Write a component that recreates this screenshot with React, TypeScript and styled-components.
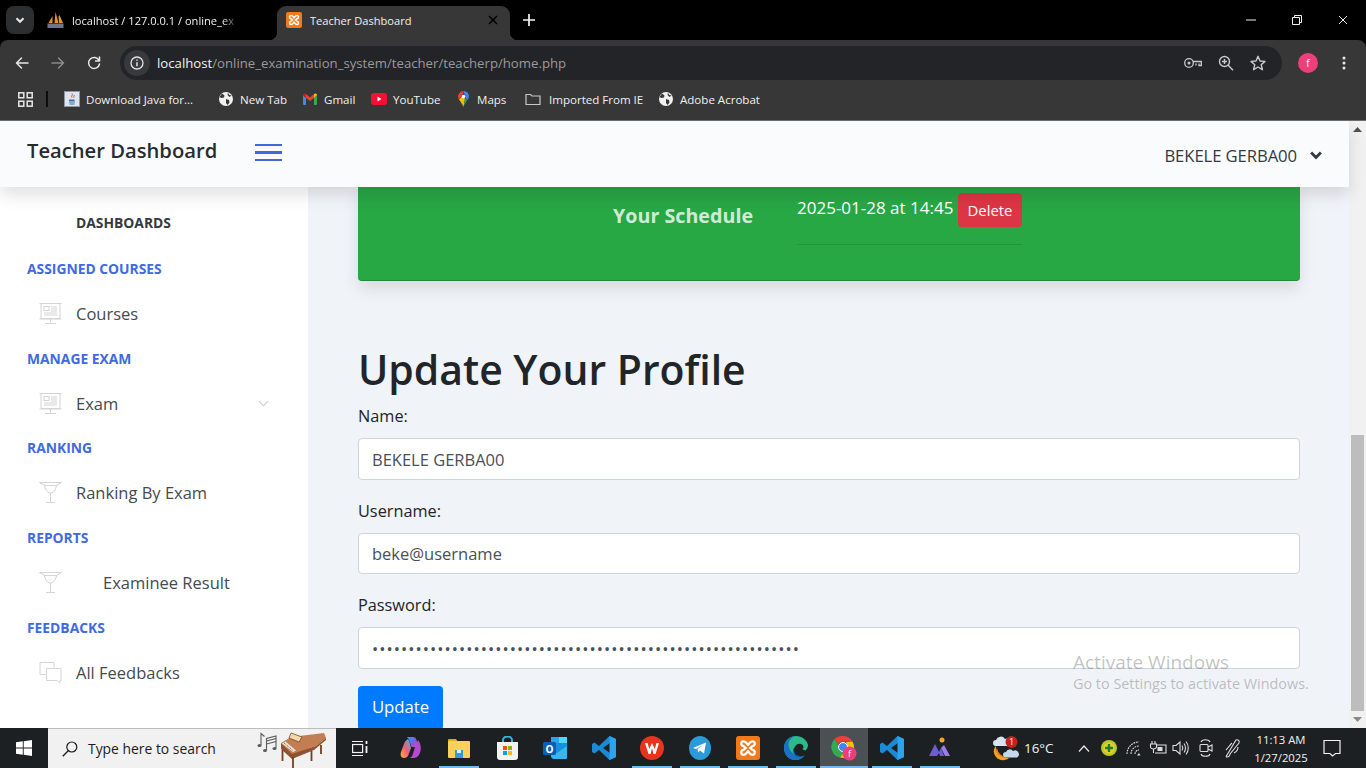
import React from "react";
import styled, { createGlobalStyle } from "styled-components";

const Global = createGlobalStyle`
  html, body { margin: 0; height: 100%; overflow: hidden; background: #000; }
  #root { height: 100%; }
  * { box-sizing: border-box; }
`;

const UI = `"Open Sans", "Noto Sans", sans-serif`;

const Screen = styled.div`
  width: 1366px; height: 768px; display: flex; flex-direction: column; overflow: hidden;
  font-family: ${UI};
`;

/* ---------- browser chrome ---------- */
const TabStrip = styled.div`
  height: 40px; flex: none; background: #000; display: flex; align-items: flex-end; position: relative; padding-left: 6px;
`;
const TabSearch = styled.div`
  width: 28px; height: 28px; margin: 0 10px 6px 0; border-radius: 8px; background: #2d2e2f; display: flex; align-items: center; justify-content: center; color: #e8e8e8;
`;
const Tab = styled.div<{ $active?: boolean }>`
  width: 233px; height: 34px; display: flex; align-items: center; padding: 0 ${p => (p.$active ? 12 : 16)}px 6px ${p => (p.$active ? 9 : 3)}px; gap: 8px; position: relative;
  border-radius: 9px 9px 0 0; background: ${p => (p.$active ? "#373737" : "transparent")};
  ${p => p.$active && `
    &::before, &::after { content: ""; position: absolute; bottom: 0; width: 8px; height: 8px; }
    &::before { left: -8px; background: radial-gradient(circle at 0 0, transparent 8px, #373737 8.5px); }
    &::after { right: -8px; background: radial-gradient(circle at 100% 0, transparent 8px, #373737 8.5px); }
  `}
`;
const TabTitle = styled.span<{ $fade?: boolean }>`
  flex: 1; font-size: 11.1px; color: #f1f1f1; white-space: nowrap; overflow: hidden;
  ${p => p.$fade && `-webkit-mask-image: linear-gradient(90deg, #000 88%, transparent 98%); mask-image: linear-gradient(90deg, #000 88%, transparent 98%);`}
`;
const NewTab = styled.div`
  width: 28px; height: 28px; margin: 0 0 6px 5px; display: flex; align-items: center; justify-content: center; color: #f4f4f4;
`;
const WindowControls = styled.div`
  margin-left: auto; height: 40px; display: flex; align-items: center; color: #f1f1f1;
`;
const WinBtn = styled.div`
  width: 46px; height: 40px; display: flex; align-items: center; justify-content: center;
`;

const ChromeBody = styled.div`
  flex: none; height: 81px; background: #373737; border-radius: 8px 8px 0 0; border-bottom: 1px solid #6d6d6d; display: flex; flex-direction: column;
`;
const Toolbar = styled.div`
  height: 40px; padding-top: 6px; display: flex; align-items: center; flex: none;
`;
const NavBtn = styled.div<{ $dim?: boolean }>`
  width: 36px; height: 34px; display: flex; align-items: center; justify-content: center; color: ${p => (p.$dim ? "#8b8b8b" : "#e8e8e8")};
  &:first-child { margin-left: 4px; }
`;
const Omnibox = styled.div`
  width: 1162px; height: 34px; margin-left: 8px; border-radius: 17px; background: #232427; display: flex; align-items: center; padding: 0 16px 0 4px;
`;
const SiteInfo = styled.div`
  width: 26px; height: 26px; border-radius: 50%; background: #38393c; display: flex; align-items: center; justify-content: center; color: #e4e4e4; margin-right: 7px;
`;
const Url = styled.div`
  font-size: 13.2px; color: #9a9a9a; white-space: nowrap; flex: 1;
  b { font-weight: 400; color: #f1f1f1; }
`;
const OmniIcons = styled.div`
  display: flex; gap: 16px; align-items: center; color: #c9c9c9;
`;
const Avatar = styled.div`
  width: 20px; height: 20px; margin-left: 16px; border-radius: 50%; background: #ec407a; color: #fff; font-size: 10px; display: flex; align-items: center; justify-content: center;
`;
const DotsBtn = styled.div`
  width: 24px; margin-left: 14px; display: flex; justify-content: center; color: #e8e8e8;
`;
const Bookmarks = styled.div`
  height: 40px; flex: none; display: flex; align-items: center; padding: 0 0 2px 18px; font-size: 11.55px; color: #f1f1f1;
`;
const AppsSep = styled.div`
  width: 2px; height: 16px; background: #0d0d0d; margin: 0 16px 0 13px;
`;
const Bookmark = styled.div<{ $w: number; $gap?: number }>`
  width: ${p => p.$w}px; display: flex; align-items: center; gap: ${p => p.$gap ?? 7}px; white-space: nowrap;
`;

/* ---------- page ---------- */
const Viewport = styled.div`
  flex: 1; min-height: 0; display: flex; position: relative; overflow: hidden;
`;
const Page = styled.div`
  flex: 1; min-width: 0; display: flex; flex-direction: column; background: #f0f3f7;
`;
const Navbar = styled.header`
  height: 66px; flex: none; background: #fafbfd; display: flex; align-items: center; padding: 0 26px 0 27px; position: relative; z-index: 2;
  box-shadow: 0 8px 16px rgba(0, 0, 0, .12);
`;
const Brand = styled.div`
  font-size: 20.2px; font-weight: 600; color: #272b30; width: 228px; margin-top: -9px; white-space: nowrap;
`;
const Burger = styled.div`
  width: 27px; display: flex; flex-direction: column; gap: 5px; margin-top: -3px;
  span { height: 2.4px; background: #4169d6; display: block; }
`;
const UserMenu = styled.div`
  margin-left: auto; display: flex; align-items: center; gap: 12px; font-size: 16.7px; color: #343a40; margin-top: 2px; letter-spacing: -.1px;
`;
const Body = styled.div`
  flex: 1; min-height: 0; display: flex;
`;
const Sidebar = styled.nav`
  width: 308px; flex: none; background: #fff; padding-top: 14px; display: grid; grid-auto-rows: 44.9px; align-content: start;
`;
const DashTitle = styled.div`
  padding: 0 0 2px 76px; align-self: center; font-size: 13.85px; font-weight: 700; color: #343a40;
`;
const SectionTitle = styled.div`
  padding: 0 0 0 27px; align-self: center; font-size: 13.85px; font-weight: 700; color: #4169e1; white-space: nowrap;
`;
const NavItem = styled.div`
  display: flex; align-items: center; padding-left: 39px; color: #454a50; font-size: 16.5px; position: relative;
`;
const NavIcon = styled.div`
  width: 23px; height: 23px; flex: none; margin-right: 14px; color: #d4d4d4;
`;
const NavLabel = styled.span<{ $indent?: boolean }>`
  margin-left: ${p => (p.$indent ? 27 : 0)}px; white-space: nowrap;
`;
const NavChevron = styled.div`
  margin-left: auto; margin-right: 38px; color: #c9c9c9; display: flex;
`;
const Main = styled.main`
  flex: 1; min-width: 0; padding: 0 49px 0 50px; overflow: hidden;
`;
const ScheduleCard = styled.section`
  height: 94px; background: #28a745; border-bottom: 1px solid #218a3a; border-radius: 0 0 4px 4px; padding-left: 255px; display: flex;
  box-shadow: 0 8px 16px rgba(0, 0, 0, .1);
`;
const CardTitle = styled.h2`
  width: 184px; margin: 15px 0 0; font-size: 19.7px; line-height: 28px; font-weight: 700; color: rgba(255, 255, 255, .8); white-space: nowrap;
`;
const ScheduleList = styled.div`
  width: 225px; padding-top: 6px;
`;
const ScheduleRow = styled.div`
  display: flex; align-items: flex-start; justify-content: space-between; color: #fff; font-size: 17px; line-height: 30px; white-space: nowrap;
`;
const DeleteBtn = styled.button`
  width: 64px; height: 34px; border: 0; border-radius: 4px; background: #dc3545; color: #fff; font: 14.9px ${UI}; padding: 0;
`;
const ScheduleRule = styled.hr`
  border: 0; border-top: 1px solid rgba(0, 0, 0, .1); margin: 17px 0 0;
`;
const Heading = styled.h1`
  margin: 61px 0 7px; font-size: 40.9px; line-height: 54px; font-weight: 600; color: #212529; white-space: nowrap;
`;
const FormGroup = styled.div`
  margin-bottom: 18px;
  &:last-of-type { margin-bottom: 17.5px; }
`;
const FieldLabel = styled.label`
  display: block; font-size: 16.3px; line-height: 27px; margin-bottom: 8px; color: #212529;
`;
const TextInput = styled.input`
  display: block; width: 100%; height: 41.5px; border: 1px solid #ced4da; border-radius: 4px; background: #fff; padding: 1px 13px 0; color: #495057; font: 16.5px ${UI}; outline: none;
  &[type="password"] { letter-spacing: 1.05px; }
`;
const UpdateBtn = styled.button`
  width: 85px; height: 44px; border: 0; border-radius: 4px; background: #007bff; color: #fff; font: 16.7px ${UI}; padding: 0 0 3px;
`;

/* scrollbar */
const Scrollbar = styled.div`
  width: 17px; flex: none; background: #f1f1f1; display: flex; flex-direction: column; align-items: center; color: #505050;
`;
const ScrollArrow = styled.div`
  height: 17px; flex: none; display: flex; align-items: center; justify-content: center;
`;
const ScrollThumb = styled.div`
  width: 13px; height: 276px; margin-top: auto; background: #bdbdbd; flex: none;
`;
const Activation = styled.div`
  position: absolute; left: 1073px; top: 529px; color: rgba(90, 95, 100, .38); white-space: nowrap;
`;
const ActTitle = styled.div` font-size: 19px; line-height: 24px; `;
const ActSub = styled.div` font-size: 14.4px; line-height: 20px; `;

/* ---------- taskbar ---------- */
const Taskbar = styled.footer`
  height: 40px; flex: none; background: #1c2022; display: flex; align-items: center; color: #f2f2f2; position: relative; z-index: 3;
`;
const StartBtn = styled.div`
  width: 48px; height: 40px; display: flex; align-items: center; justify-content: center; color: #fff;
`;
const SearchBox = styled.div`
  width: 288px; height: 40px; background: #f1f1f1; border-top: 1px solid #bcbcbc; display: flex; align-items: center; padding-left: 14px; color: #1c1c1c; font-size: 13.9px; flex: none;
`;
const SearchText = styled.span` margin-left: 10px; flex: 1; white-space: nowrap; `;
const PianoArt = styled.div` align-self: flex-end; margin-right: 8px; `;
const Slot = styled.div<{ $on?: boolean; $active?: boolean }>`
  width: 48.1px; height: 40px; display: flex; align-items: center; justify-content: center; position: relative; flex: none;
  background: ${p => (p.$active ? "#4b5054" : "transparent")};
  ${p => p.$on && `&::after { content: ""; position: absolute; left: ${p.$active ? 0 : 4}px; right: ${p.$active ? 0 : 4}px; bottom: 0; height: 2px; background: #76b9ed; }`}
`;
const TaskViewSlot = styled(Slot)` margin-right: 3px; `;
const Tray = styled.div`
  margin-left: auto; display: flex; align-items: center; height: 40px; font-size: 13px;
`;
const Weather = styled.div`
  display: flex; align-items: center; gap: 5px; width: 80px; font-size: 13.4px; white-space: nowrap;
`;
const TrayIcon = styled.div<{ $w: number }>`
  width: ${p => p.$w}px; display: flex; justify-content: center; align-items: center; color: #e8e8e8;
`;
const Clock = styled.div`
  width: 74px; padding-top: 1px; text-align: center; font-size: 11.3px; line-height: 18px; white-space: nowrap;
`;
const NotifyBtn = styled.div`
  width: 48px; display: flex; justify-content: center; padding-right: 20px; color: #f2f2f2;
`;

/* ---------- drawings ---------- */
const S = ({ w = 16, h = 16, vb = "0 0 16 16", children }: { w?: number; h?: number; vb?: string; children: React.ReactNode }) => (
  <svg width={w} height={h} viewBox={vb} fill="none" style={{ display: "block", flex: "none" }}>{children}</svg>
);
const line = { stroke: "currentColor", strokeWidth: 1.5, strokeLinecap: "round" as const, strokeLinejoin: "round" as const };

const Chevron = ({ w = 10, sw = 2 }: { w?: number; sw?: number }) => <S w={w} h={w} vb="0 0 10 10"><path d="M1.5 3.2 5 6.8l3.5-3.6" stroke="currentColor" strokeWidth={sw} /></S>;
const Cross = ({ s = 10, sw = 1.5 }: { s?: number; sw?: number }) => <S w={s} h={s} vb="0 0 10 10"><path d="M1 1l8 8M9 1 1 9" stroke="currentColor" strokeWidth={sw} /></S>;

const PmaFav = () => (
  <S w={17} h={18} vb="0 0 17 18">
    <path d="M1.500 12 5.500 5v7zM7.500 12 8.500 1l3 11zM12 12l-.5-6 1-2L16 12z" fill="#e8912a" />
    <rect x=".5" y="12.500" width="16" height="4.500" fill="#6f7590" />
  </S>
);
const XamppFav = ({ s = 16 }: { s?: number }) => (
  <S w={s} h={s} vb="0 0 16 16">
    <rect width="16" height="16" rx="2" fill="#f27a1a" />
    <path d="M5 3.500c-2 0-2 3 0 3.200L6.500 8 5 9.300c-2 .2-2 3.200 0 3.200s2-1.600 3-2.400c1 .8 1 2.400 3 2.400s2-3 0-3.200L9.500 8 11 6.700c2-.2 2-3.200 0-3.200S9 5.100 8 5.900C7 5.100 7 3.500 5 3.500z" fill="none" stroke="#fff" strokeWidth="1.500" />
  </S>
);
const Globe = () => (
  <S w={14} h={14} vb="0 0 14 14">
    <circle cx="7" cy="7" r="7" fill="#f1f1f1" />
    <path d="M3 1.500 5.500 3.500 5 5.500 2.500 6 .5 5zM7 7l3 1 .5 2.500L8.500 13 7 11zM9 .8l1 2 2.500.8-2 1.400L8.500 3z" fill="#373737" />
  </S>
);
const JavaFav = () => (
  <S w={16} h={16}>
    <rect x=".5" y=".5" width="15" height="15" fill="#dfe5ec" stroke="#8a98a8" />
    <path d="M5 11h6M5.500 13h5" stroke="#3a6ea5" />
    <path d="M8 2.500c1.500 1.500-1.500 2.500 0 4M10 4c.8 1-1 1.500 0 2.500" stroke="#d0473a" />
    <path d="M5 8.500h5.500v1.500H5z" fill="#3a6ea5" />
  </S>
);
const GmailFav = () => (
  <S w={14} h={12} vb="0 0 14 12">
    <path d="M0 2v9a1 1 0 0 0 1 1h2V5z" fill="#4285f4" /><path d="M14 2v9a1 1 0 0 1-1 1h-2V5z" fill="#34a853" />
    <path d="M3 5v-4L7 4.500 11 1v4L7 8z" fill="#ea4335" /><path d="M0 2c0-1.500 2-2 3-1v4z" fill="#c5221f" /><path d="M14 2c0-1.500-2-2-3-1v4z" fill="#fbbc04" />
  </S>
);
const YoutubeFav = () => (
  <S w={16} h={12} vb="0 0 16 12"><rect width="16" height="12" rx="3" fill="#f50f35" /><path d="M6.500 3.500v5L10.500 6z" fill="#fff" /></S>
);
const MapsFav = () => (
  <S w={11} h={16} vb="0 0 11 16">
    <path d="M5.500 0A5.500 5.500 0 0 0 1 8.500L5.500 2z" fill="#ea4335" /><path d="M5.500 0C8 0 10 1.500 10.700 3.500L7 5z" fill="#4285f4" />
    <path d="M10.700 3.500C11.500 6 10 8 9 9.500L7 5z" fill="#4285f4" /><path d="M1 8.500 4 5.500 7 7 5.500 16C4.500 13 2.500 10.800 1 8.500z" fill="#fbbc04" /><path d="M7 7l2 2.500C8 11 6.200 13 5.500 16z" fill="#34a853" />
    <circle cx="5.500" cy="5.500" r="1.800" fill="#fff" />
  </S>
);
const Folder = () => <S w={16} h={14} vb="0 0 16 14"><path d="M1 2.500h4.500l1.500 1.500h8v8.500H1z" stroke="#c8c8c8" strokeWidth="1.200" /></S>;
const Board = () => (
  <S w={23} h={23} vb="0 0 23 23">
    <g stroke="currentColor" strokeWidth="1">
      <path d="M.5 1.500h22M2 1.500v15h19v-15M.5 17h22M11.500 17v3.500M6 21.500h11" />
      <rect x="5" y="4.500" width="5" height="4" /><path d="M12 5h6M12 7h6M12 9h6M5 11h13M5 13h13" />
    </g>
  </S>
);
const Trophy = () => (
  <S w={23} h={23} vb="0 0 23 23">
    <g stroke="currentColor" strokeWidth="1"><path d="M.5 1.500h22L18 4l-2 5c-1 2-3 3-4.500 3S8 11 7 9L5 4zM11.500 12v9M7 21.500h9M5 4.500h13" /></g>
  </S>
);
const Chat = () => (
  <S w={23} h={23} vb="0 0 23 23">
    <g stroke="currentColor" strokeWidth="1"><path d="M7 13.500H1V1.500h14v5" /><path d="M7.500 7.500h14.500v12h-1v2.500l-3-2.500H7.500z" /></g>
  </S>
);

/* taskbar art */
const WinLogo = () => <S w={16} h={16}><path d="M0 2.300 6.800 1.300v6.200H0zM7.700 1.200 16 0v7.500H7.700zM0 8.500h6.800v6.200L0 13.700zM7.700 8.500H16V16l-8.300-1.200z" fill="#fff" /></S>;
const Lens = () => <S w={16} h={16}><circle cx="9.800" cy="6" r="5" stroke="#1c1c1c" strokeWidth="1.200" /><path d="M6.200 9.700.8 15.200" stroke="#1c1c1c" strokeWidth="1.300" /></S>;
const Piano = () => (
  <S w={72} h={36} vb="0 0 72 36">
    <g stroke="#5a5a5a" strokeWidth="1.100" fill="none">
      <path d="M5 13V1.500l3.500 3" />
      <path d="M10.500 18V6.500l9.500-2.500v12M10.500 9l9.500-2.500M10.500 12l9.500-2.500" />
    </g>
    <g fill="#5a5a5a"><ellipse cx="3.500" cy="13.500" rx="2" ry="1.600" /><ellipse cx="9" cy="18.500" rx="2" ry="1.600" /><ellipse cx="18.500" cy="16.500" rx="2" ry="1.600" /></g>
    <path d="M25 11 35 5l33-4 2 5-10 8-6 2-18 8z" fill="#c27d52" />
    <path d="M25 11v6l11 10 22-9 12-10V6l-10 8-24 8z" fill="#8e5233" />
    <path d="M26 11.500 37 20l3-1.500L29.500 9.500z" fill="#efe6d8" />
    <path d="M28 11l9 7.500" stroke="#3a2a20" strokeWidth=".8" strokeDasharray="1 1" />
    <path d="M35 1l11 4-3 5-10-4z" fill="#f3d9a8" stroke="#7d4427" strokeWidth=".8" />
    <path d="M26.500 18v11M37 25v11M55.500 19v10M65 13v9" stroke="#76401f" strokeWidth="1.800" />
  </S>
);
const TaskView = () => <S w={17} h={17} vb="0 0 17 17"><g stroke="#f2f2f2" strokeWidth="1.200"><path d="M0 1.500h11M0 15.500h11" /><rect x=".6" y="4.500" width="10" height="8" /><path d="M14.500 1v3M14.500 6v7" strokeWidth="1.800" /></g></S>;
const Copilot = () => (
  <S w={24} h={24} vb="0 0 24 24">
    <defs><linearGradient id="cpa" x1="0" y1="0" x2="1" y2="1"><stop offset="0" stopColor="#2aa4e8" /><stop offset=".55" stopColor="#7b5be0" /><stop offset="1" stopColor="#e8489a" /></linearGradient>
      <linearGradient id="cpb" x1="0" y1="1" x2="1" y2="0"><stop offset="0" stopColor="#f6b73c" /><stop offset=".5" stopColor="#ee5c7a" /><stop offset="1" stopColor="#3fb7e8" /></linearGradient></defs>
    <path d="M9 1h5c2 0 3 1 3.500 3l2 7h-7L10 4C9.500 2.500 9 2 8 2c.3-.6.6-1 1-1z" fill="url(#cpa)" />
    <path d="M5 8c.5-2 2-4 4-5 1 1 1.500 3 2 5l1 4-3 8c-1 1-2 2-4 2-3 0-4-3-3-6z" fill="url(#cpb)" />
    <path d="M19 4c2 2 3.500 7 2.500 11s-3 7-6.500 7h-5c2 0 3-1.500 3.500-3L16 11c1-2 2-5 3-7z" fill="#b34bd0" />
  </S>
);
const Explorer = () => (
  <S w={22} h={20} vb="0 0 22 20">
    <path d="M0 2a1 1 0 0 1 1-1h7l2 3H0z" fill="#e9a81e" /><rect y="3" width="22" height="17" rx="1" fill="#fbd15b" />
    <path d="M7 12h8v8H7z" fill="#2f9bd8" /><path d="M9 12h4v3H9z" fill="#fff" opacity=".85" />
  </S>
);
const Store = () => (
  <S w={23} h={24} vb="0 0 23 24">
    <path d="M7 7V4a4.500 3.500 0 0 1 9 0v3" stroke="#2fb6d9" strokeWidth="2" />
    <path d="M1 6h21v15a3 3 0 0 1-3 3H4a3 3 0 0 1-3-3z" fill="#f2f2f2" />
    <path d="M7 10h4v4H7z" fill="#f25022" /><path d="M12 10h4v4h-4z" fill="#7fba00" /><path d="M7 15h4v4H7z" fill="#00a4ef" /><path d="M12 15h4v4h-4z" fill="#ffb900" />
  </S>
);
const Outlook = () => (
  <S w={24} h={22} vb="0 0 24 22">
    <path d="M8 0h16v12l-8 6H8z" fill="#1490df" /><path d="M8 0h8v6H8z" fill="#28a8ea" /><path d="M16 0h8v6h-8z" fill="#50d9ff" />
    <path d="M10 22h13a1 1 0 0 0 1-1V9l-10 7-6-4v8z" fill="#35b8f1" />
    <rect y="5" width="13" height="13" rx="1.500" fill="#0a5fb4" />
    <text x="6.500" y="15.500" textAnchor="middle" fontSize="10" fontWeight="700" fill="#fff" fontFamily="Open Sans">O</text>
  </S>
);
const VSCode = () => (
  <S w={24} h={24} vb="0 0 24 24">
    <path d="M17.500 0 7 10 2.500 6.500 0 8v8l2.500 1.500L7 14l10.500 10 6.500-3V3zM18 7v10l-7-5z" fill="#1a8ad4" />
    <path d="M17.500 0 24 3v18l-6.500 3z" fill="#2aa4ef" />
  </S>
);
const Wps = () => (
  <S w={24} h={24} vb="0 0 24 24">
    <circle cx="12" cy="12" r="12" fill="#e8341c" />
    <path d="M5 7l3.500 11h2L12 12l1.500 6h2L19 7h-2.500L14.700 13 12 7l-2.700 6L7.500 7z" fill="#fff" />
  </S>
);
const Telegram = () => (
  <S w={22} h={24} vb="0 0 22 24">
    <ellipse cx="11" cy="12" rx="11" ry="12" fill="#2c9ad8" />
    <path d="M4 12 17 6.500 15 17.500l-4-3-2 2-.5-3.500L15 8.500 7 13z" fill="#fff" />
  </S>
);
const Edge = () => (
  <S w={24} h={24} vb="0 0 24 24">
    <path d="M12 0C5 0 0 5.500 0 12c0 6.500 5 12 11 12 4 0 7-1.500 9.500-4.500-3 1.500-8 1.500-10-1.500-1.500-2-1.500-5 0-6.500C11 9.500 14 7 17 8c3 1 3 4 1.500 5.500l3 1C23 13 24 11 24 9 23 4 18 0 12 0z" fill="#2dba8a" />
    <path d="M0 12C0 5 5 0 12 0c-5 1-9 6-7 11 1 5 5 8 10 9 2 .5 4 .5 5.500-.5C18 22.500 15 24 11 24 5 24 0 18.500 0 12z" fill="#1771c6" />
    <path d="M10.500 12c-1.500 1.500-1.500 4.500 0 6.500 2 3 7 3 10 1.500-3 .5-7 0-9-2-1-1.500-1.500-4-1-6z" fill="#0e4e9b" />
  </S>
);
const ChromeIcon = () => (
  <S w={26} h={26} vb="0 0 26 26">
    <path d="M12 1a11 11 0 0 1 9.500 5.500H12a5.500 5.500 0 0 0-5 3L3.500 4A11 11 0 0 1 12 1z" fill="#ea4335" />
    <path d="M3.500 4 8.500 12.500a4 4 0 0 0 4.500 4L9 22.500A11 11 0 0 1 3.500 4z" fill="#34a853" />
    <path d="M21.500 6.500A11 11 0 0 1 9 22.500l4.500-6.500a4 4 0 0 0 2.500-5.500L15 7z" fill="#fbbc04" />
    <circle cx="12" cy="12" r="4.500" fill="#4285f4" stroke="#fff" strokeWidth="1" />
    <circle cx="18.500" cy="18.500" r="7" fill="#ec407a" />
    <text x="18.500" y="22" textAnchor="middle" fontSize="9" fill="#fff" fontFamily="Open Sans">f</text>
  </S>
);
const Mountains = () => (
  <S w={24} h={24} vb="0 0 24 24">
    <circle cx="14" cy="4" r="2.500" fill="#f5a623" />
    <path d="M1 20 7 8l4 8 2-4 3 8h-4l-1-3-2 3z" fill="#6d5dd3" /><path d="M13 12l3-3 6 11h-5z" fill="#9b7cf0" />
  </S>
);
const WeatherIcon = () => (
  <S w={27} h={28} vb="0 0 27 28">
    <path d="M4 12c0 7 4 12 13 12-3 3-10 3-13-1s-3-8 0-11z" fill="#f5a21e" />
    <path d="M5 14c1 5 4 8 9 9-5 1-8-1-10-5z" fill="#e8861a" />
    <path d="M1 9a3 3 0 0 1 3-3 5 5 0 0 1 9-1 3.500 3.500 0 0 1 3 7H3a3 3 0 0 1-2-3z" fill="#d8e4f0" />
    <path d="M11 21a3 3 0 0 1 3-3 4 4 0 0 1 7-1 3.500 3.500 0 0 1 4 6.500H13a3 3 0 0 1-2-2.500z" fill="#c5d8ec" />
    <circle cx="19.500" cy="8" r="6" fill="#c8201e" />
    <text x="19.500" y="11" textAnchor="middle" fontSize="9" fill="#fff" fontFamily="Open Sans">1</text>
  </S>
);
const GreenTray = () => (
  <S w={16} h={16}><circle cx="8" cy="8" r="8" fill="#b9c92a" /><circle cx="8" cy="8" r="5.500" fill="#e8cf2a" /><path d="M8 4v8M4 8h8" stroke="#1d7d2e" strokeWidth="2.400" /></S>
);
const Wifi = () => <S w={16} h={16}><g stroke="#ddd" strokeWidth="1.100" strokeDasharray="1.800 .8"><path d="M9 14a4 4 0 0 1 4-4M5 14a8 8 0 0 1 8-8M1 14A12 12 0 0 1 13 2" /></g><path d="M11 15.500l2-2.500 1.500 2.500z" fill="#ddd" /></S>;
const Battery = () => <S w={18} h={16} vb="0 0 18 16"><g stroke="#ddd" strokeWidth="1.100"><path d="M8 5h9v8H6" /><path d="M3 1v3M6 1v3M1.500 4h6v3c0 1-1.500 2-3 2s-3-1-3-2zM4.500 9v4" /></g><rect x="8.500" y="7" width="5" height="4" fill="#ddd" /></S>;
const Speaker = () => <S w={17} h={16} vb="0 0 17 16"><g stroke="#ddd" strokeWidth="1.100"><path d="M1 5.500h3L8 2v12L4 10.500H1z" /><path d="M10 5.500c1 1.500 1 3.500 0 5M12 3.500c2 2.500 2 6.500 0 9M14 1.500c3 3.500 3 9.500 0 13" /></g></S>;
const Meet = () => <S w={14} h={20} vb="0 0 14 20"><g stroke="#ddd" strokeWidth="1.100"><path d="M2 4c1-3 8-3 9 0M2 16c1 3 8 3 9 0" /><rect x="1" y="6.500" width="8" height="7" rx="1" /><path d="M9 9l4-2v6l-4-2" /></g></S>;
const Pen = () => <S w={18} h={20} vb="0 0 18 20"><g stroke="#ddd" strokeWidth="1.100" fill="none"><path d="M3 17 12 2c2-1 4 1 3 3L6 16c0 1-1 3-3 3-1 0-1-1 0-2zM8 5c-2 2-4 5-6 7M14 9c0 3-2 5-4 6" /></g></S>;
const Notify = () => <S w={18} h={18} vb="0 0 18 18"><path d="M1 1.500h16v13h-4.500L9.500 17l-2.500-2.500H1z" stroke="#f2f2f2" strokeWidth="1.200" /></S>;

const bookmarks: { w: number; gap?: number; icon: React.ReactNode; label: string }[] = [
  { w: 155, gap: 6, icon: <JavaFav />, label: "Download Java for..." },
  { w: 84, icon: <Globe />, label: "New Tab" },
  { w: 68, icon: <GmailFav />, label: "Gmail" },
  { w: 87, gap: 6, icon: <YoutubeFav />, label: "YouTube" },
  { w: 67, gap: 8, icon: <MapsFav />, label: "Maps" },
  { w: 134, gap: 8, icon: <Folder />, label: "Imported From IE" },
  { w: 110, icon: <Globe />, label: "Adobe Acrobat" },
];

const apps: { art: React.ReactNode; on?: boolean; active?: boolean }[] = [
  { art: <Copilot /> },
  { art: <Explorer />, on: true },
  { art: <Store /> },
  { art: <Outlook /> },
  { art: <VSCode /> },
  { art: <Wps />, on: true },
  { art: <Telegram />, on: true },
  { art: <XamppFav s={24} />, on: true },
  { art: <Edge />, on: true },
  { art: <ChromeIcon />, on: true, active: true },
  { art: <VSCode />, on: true },
  { art: <Mountains />, on: true },
];

type Row =
  | { kind: "dash" | "section"; label: string }
  | { kind: "item"; label: string; icon: React.ReactNode; indent?: boolean; more?: boolean };

const rows: Row[] = [
  { kind: "dash", label: "DASHBOARDS" },
  { kind: "section", label: "ASSIGNED COURSES" },
  { kind: "item", label: "Courses", icon: <Board /> },
  { kind: "section", label: "MANAGE EXAM" },
  { kind: "item", label: "Exam", icon: <Board />, more: true },
  { kind: "section", label: "RANKING" },
  { kind: "item", label: "Ranking By Exam", icon: <Trophy /> },
  { kind: "section", label: "REPORTS" },
  { kind: "item", label: "Examinee Result", icon: <Trophy />, indent: true },
  { kind: "section", label: "FEEDBACKS" },
  { kind: "item", label: "All Feedbacks", icon: <Chat /> },
];

const noop = () => undefined;

export default function App() {
  return (
    <Screen>
      <Global />
      <TabStrip>
        <TabSearch><Chevron w={10} /></TabSearch>
        <Tab>
          <PmaFav />
          <TabTitle $fade>localhost / 127.0.0.1 / online_ex</TabTitle>
          <Cross />
        </Tab>
        <Tab $active>
          <XamppFav />
          <TabTitle>Teacher Dashboard</TabTitle>
          <Cross />
        </Tab>
        <NewTab><S w={12} h={12} vb="0 0 12 12"><path d="M6 0v12M0 6h12" stroke="currentColor" strokeWidth="1.700" /></S></NewTab>
        <WindowControls>
          <WinBtn><S w={10} h={10} vb="0 0 10 10"><path d="M0 5h10" stroke="currentColor" /></S></WinBtn>
          <WinBtn><S w={10} h={10} vb="0 0 10 10"><path d="M.5 2.500h7v7h-7zM2.500 2.500v-2h7v7h-2" stroke="currentColor" /></S></WinBtn>
          <WinBtn><Cross s={10} sw={1} /></WinBtn>
        </WindowControls>
      </TabStrip>

      <ChromeBody>
        <Toolbar>
          <NavBtn><S><path d="M14 8H2.500M7.500 3 2.500 8l5 5" {...line} /></S></NavBtn>
          <NavBtn $dim><S><path d="M2 8h11.500M8.500 3l5 5-5 5" {...line} /></S></NavBtn>
          <NavBtn><S><path d="M13 5.500A5.500 5.500 0 1 0 13.500 9M13.500 2v4h-4" {...line} /></S></NavBtn>
          <Omnibox>
            <SiteInfo><S w={14} h={14} vb="0 0 14 14"><circle cx="7" cy="7" r="6" stroke="currentColor" strokeWidth="1.300" /><path d="M7 6.300v4M7 3.500v1.300" stroke="currentColor" strokeWidth="1.500" /></S></SiteInfo>
            <Url><b>localhost</b>/online_examination_system/teacher/teacherp/home.php</Url>
            <OmniIcons>
              <S w={18} h={12} vb="0 0 18 12"><circle cx="5" cy="6" r="4.300" stroke="currentColor" strokeWidth="1.300" /><circle cx="5" cy="6" r="1.500" fill="currentColor" /><path d="M9 4.500h8.300v4h-2.300v-2M12 6.500v2" stroke="currentColor" strokeWidth="1.300" /></S>
              <S w={16} h={16}><circle cx="6.500" cy="6.500" r="5" stroke="currentColor" strokeWidth="1.400" /><path d="M10 10l5 5.300M4 6.500h5M6.500 4v5" stroke="currentColor" strokeWidth="1.400" /></S>
              <S w={16} h={16}><path d="M8 1.300 10 6l5 .4-3.800 3.300 1.200 5L8 12l-4.400 2.700 1.200-5L1 6.400 6 6z" stroke="currentColor" strokeWidth="1.400" strokeLinejoin="round" /></S>
            </OmniIcons>
          </Omnibox>
          <Avatar>f</Avatar>
          <DotsBtn><S w={4} h={14} vb="0 0 4 14"><circle cx="2" cy="2" r="1.500" fill="currentColor" /><circle cx="2" cy="7" r="1.500" fill="currentColor" /><circle cx="2" cy="12" r="1.500" fill="currentColor" /></S></DotsBtn>
        </Toolbar>
        <Bookmarks>
          <S w={15} h={15} vb="0 0 15 15"><g fill="none" stroke="#e8e8e8" strokeWidth="1.500"><rect x=".8" y=".8" width="5" height="5" /><rect x="9.200" y=".8" width="5" height="5" /><rect x=".8" y="9.200" width="5" height="5" /><rect x="9.200" y="9.200" width="5" height="5" /></g></S>
          <AppsSep />
          {bookmarks.map(b => (
            <Bookmark key={b.label} $w={b.w} $gap={b.gap}>{b.icon}<span>{b.label}</span></Bookmark>
          ))}
        </Bookmarks>
      </ChromeBody>

      <Viewport>
        <Page>
          <Navbar>
            <Brand>Teacher Dashboard</Brand>
            <Burger><span /><span /><span /></Burger>
            <UserMenu>BEKELE GERBA00 <Chevron w={14} sw={2} /></UserMenu>
          </Navbar>
          <Body>
            <Sidebar>
              {rows.map(r => {
                if (r.kind === "dash") return <DashTitle key={r.label}>{r.label}</DashTitle>;
                if (r.kind === "section") return <SectionTitle key={r.label}>{r.label}</SectionTitle>;
                return (
                  <NavItem key={r.label}>
                    <NavIcon>{r.icon}</NavIcon>
                    <NavLabel $indent={r.indent}>{r.label}</NavLabel>
                    {r.more && <NavChevron><Chevron w={13} sw={.8} /></NavChevron>}
                  </NavItem>
                );
              })}
            </Sidebar>
            <Main>
              <ScheduleCard>
                <CardTitle>Your Schedule</CardTitle>
                <ScheduleList>
                  <ScheduleRow>
                    <span>2025-01-28 at 14:45</span>
                    <DeleteBtn>Delete</DeleteBtn>
                  </ScheduleRow>
                  <ScheduleRule />
                </ScheduleList>
              </ScheduleCard>
              <Heading>Update Your Profile</Heading>
              <form>
                <FormGroup>
                  <FieldLabel>Name:</FieldLabel>
                  <TextInput value="BEKELE GERBA00" onChange={noop} />
                </FormGroup>
                <FormGroup>
                  <FieldLabel>Username:</FieldLabel>
                  <TextInput value="beke@username" onChange={noop} />
                </FormGroup>
                <FormGroup>
                  <FieldLabel>Password:</FieldLabel>
                  <TextInput type="password" value={"x".repeat(59)} onChange={noop} />
                </FormGroup>
                <UpdateBtn type="button">Update</UpdateBtn>
              </form>
            </Main>
          </Body>
        </Page>
        <Scrollbar>
          <ScrollArrow><S w={9} h={5} vb="0 0 9 5"><path d="M4.500 0 9 5H0z" fill="currentColor" /></S></ScrollArrow>
          <ScrollThumb />
          <ScrollArrow><S w={9} h={5} vb="0 0 9 5"><path d="M4.500 5 9 0H0z" fill="#8a8a8a" /></S></ScrollArrow>
        </Scrollbar>
        <Activation>
          <ActTitle>Activate Windows</ActTitle>
          <ActSub>Go to Settings to activate Windows.</ActSub>
        </Activation>
      </Viewport>

      <Taskbar>
        <StartBtn><WinLogo /></StartBtn>
        <SearchBox>
          <Lens />
          <SearchText>Type here to search</SearchText>
          <PianoArt><Piano /></PianoArt>
        </SearchBox>
        <TaskViewSlot><TaskView /></TaskViewSlot>
        {apps.map((a, i) => <Slot key={i} $on={a.on} $active={a.active}>{a.art}</Slot>)}
        <Tray>
          <Weather><WeatherIcon /><span>16°C</span></Weather>
          <TrayIcon $w={24}><S w={12} h={7} vb="0 0 12 7"><path d="M1 6.500 6 1l5 5.500" stroke="currentColor" strokeWidth="1.200" /></S></TrayIcon>
          <TrayIcon $w={26}><GreenTray /></TrayIcon>
          <TrayIcon $w={24}><Wifi /></TrayIcon>
          <TrayIcon $w={24}><Battery /></TrayIcon>
          <TrayIcon $w={20}><Speaker /></TrayIcon>
          <TrayIcon $w={32}><Meet /></TrayIcon>
          <TrayIcon $w={22}><Pen /></TrayIcon>
          <Clock><div>11:13 AM</div><div>1/27/2025</div></Clock>
          <NotifyBtn><Notify /></NotifyBtn>
        </Tray>
      </Taskbar>
    </Screen>
  );
}
